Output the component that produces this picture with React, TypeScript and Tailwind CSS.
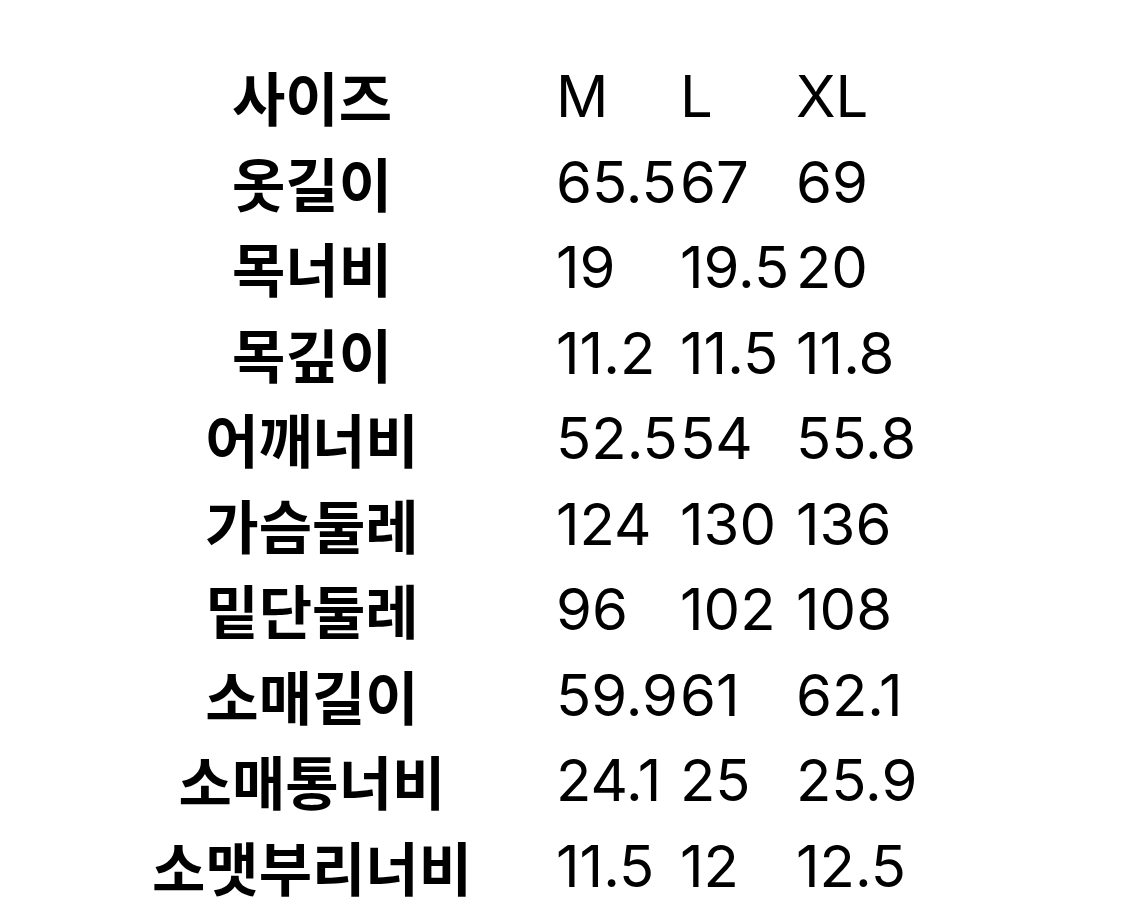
const rows: [string, string, string, string][] = [
  ['사이즈', 'M', 'L', 'XL'],
  ['옷길이', '65.5', '67', '69'],
  ['목너비', '19', '19.5', '20'],
  ['목깊이', '11.2', '11.5', '11.8'],
  ['어깨너비', '52.5', '54', '55.8'],
  ['가슴둘레', '124', '130', '136'],
  ['밑단둘레', '96', '102', '108'],
  ['소매길이', '59.9', '61', '62.1'],
  ['소매통너비', '24.1', '25', '25.9'],
  ['소맷부리너비', '11.5', '12', '12.5'],
]

export default function App() {
  return (
    <div className="w-[1125px] h-[903px] bg-white text-black overflow-hidden pt-[67px] flex flex-col gap-[27.5px]">
      {rows.map(([label, m, l, xl]) => (
        <div key={label} className="flex items-center h-[58px]">
          <div className="w-[324px] ml-[150px] text-center font-bold text-[58px] leading-none font-['Noto_Sans_CJK_KR',sans-serif] whitespace-nowrap">
            {label}
          </div>
          <div className="ml-[82px] flex text-[58px] leading-none font-['Inter','Liberation_Sans',sans-serif] whitespace-nowrap">
            <span className="w-[124px]">{m}</span>
            <span className="w-[116px]">{l}</span>
            <span>{xl}</span>
          </div>
        </div>
      ))}
    </div>
  )
}
